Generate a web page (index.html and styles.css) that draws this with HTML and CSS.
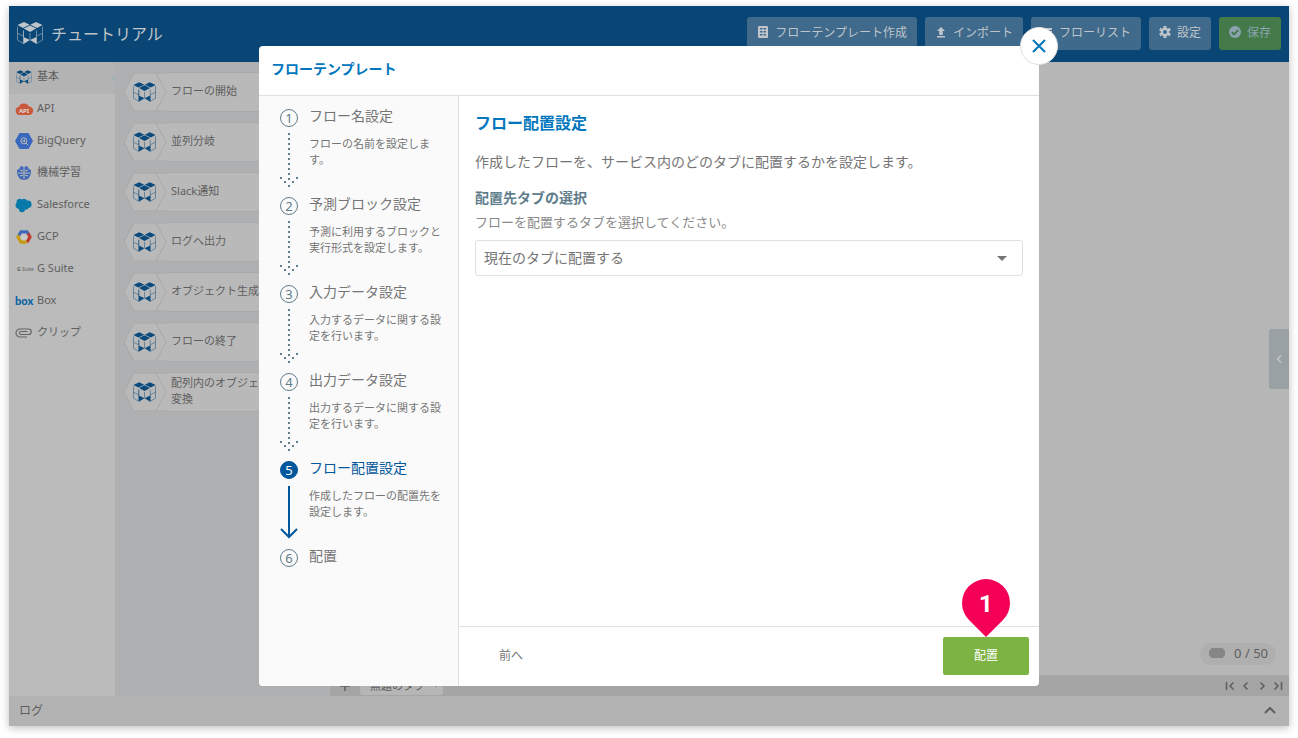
FILE: index.html
```html
<!DOCTYPE html>
<html lang="ja">
<head>
    <meta charset="UTF-8">
    <meta name="viewport" content="width=device-width, initial-scale=1.0">
    <title>チュートリアル</title>
    <link rel="stylesheet" href="styles.css">
</head>
<body>
    <svg class="defs" aria-hidden="true">
        <symbol id="logo" viewBox="0 0 26 22">
            <path d="M0.500 3 7 0l5.700 2.700L6 6zM25.500 3 19 0l-5.700 2.700L20 6zM6.800 6.600 13 3.500l6.200 3.100L13 10zM6.500 15 13 18l-6.500 4zM19.500 15 13 18l6.500 4z" fill="currentColor"/>
            <path d="M.5 4.500v13.500l6 3.500V8.500M.5 11.200l6 3M6.500 15V8.500M13 11v7M25.500 4.500v13.500l-6 3.500V8.500M25.500 11.200l-6 3" fill="none" stroke="currentColor" stroke-width=".9" stroke-opacity=".6"/>
        </symbol>
        <symbol id="hex" viewBox="0 0 44 40">
            <path class="hex-fill" d="M44 1H11L1 20l10 19h33"/>
            <path class="hex-line" d="M33 1l10 19-10 19"/>
        </symbol>
        <symbol id="dots" viewBox="0 0 20 55">
            <path d="M10 0v50" fill="none" stroke="currentColor" stroke-width="2" stroke-dasharray="2 3"/>
            <path d="M1 44h2v2H1zM5 48h2v2H5zM9 52h2v2H9zM13 48h2v2h-2zM17 44h2v2h-2z" fill="currentColor"/>
        </symbol>
        <symbol id="arrow" viewBox="0 0 20 55">
            <path d="M10 1v51M2 44l8 8 8-8" fill="none" stroke="currentColor" stroke-width="2"/>
        </symbol>
    </svg>

    <div class="app">
        <header class="header">
            <svg class="header-logo"><use href="#logo"/></svg>
            <h1>チュートリアル</h1>
            <div class="header-buttons">
                <button>
                    <svg viewBox="0 0 12 12"><path fill="currentColor" fill-rule="evenodd" d="M2 0h8a1 1 0 0 1 1 1v10a1 1 0 0 1-1 1H2a1 1 0 0 1-1-1V1a1 1 0 0 1 1-1zm1 2v1.500h2.500V2zm3.500 0v1.500H9V2zM3 5v1.500h2.500V5zm3.500 0v1.500H9V5zM3 8v1.500h2.500V8zm3.500 0v1.500H9V8z"/></svg>
                    フローテンプレート作成
                </button>
                <button>
                    <svg viewBox="0 0 12 12"><path fill="currentColor" d="M6 1l4 4H7.800v4H4.200V5H2zM2 10h8v1.600H2z"/></svg>
                    インポート
                </button>
                <button>
                    <svg viewBox="0 0 12 12"><path fill="currentColor" d="M1 2h10v2H1zM1 5h10v2H1zM1 8h10v2H1z"/></svg>
                    フローリスト
                </button>
                <button>
                    <svg viewBox="0 0 12 12"><g stroke="currentColor" stroke-width="3"><path d="M6 0v12M.8 3l10.400 6M.8 9l10.400-6"/></g><circle cx="6" cy="6" r="4.300" fill="currentColor"/><circle class="gear-hole" cx="6" cy="6" r="2"/></svg>
                    設定
                </button>
                <button class="save">
                    <svg viewBox="0 0 12 12"><circle cx="6" cy="6" r="6" fill="currentColor"/><path class="save-check" d="M2.800 6.200l2.200 2.200 4.300-4.300"/></svg>
                    保存
                </button>
            </div>
        </header>

        <div class="main">
            <ul class="categories">
                <li class="active"><svg class="brand" viewBox="0 0 18 18"><use href="#logo" x="1" y="2" width="16" height="14"/></svg>基本</li>
                <li>
                    <svg viewBox="0 0 18 18"><path fill="#c9573a" d="M4.500 15a4.200 4.200 0 0 1-.8-8.200A5.700 5.700 0 0 1 14 6.600a4.200 4.200 0 0 1 0 8.400z"/><text class="api-text" x="9" y="12.500">API</text></svg>
                    API
                </li>
                <li>
                    <svg viewBox="0 0 18 18"><path fill="#3a68bd" d="M4.500 1h9L18 9l-4.500 8h-9L0 9z"/><circle cx="8.800" cy="8.800" r="3" fill="none" stroke="#bbb"/><path d="M11 11l2 2M8 8v2M9.500 7.500V10" stroke="#bbb"/></svg>
                    BigQuery
                </li>
                <li>
                    <svg viewBox="0 0 18 18"><path fill="#4169b8" d="M6 2l3 1 3-1 2 3 2 1v3l-1 3-2 3-4 1-4-1-2-3-1-3V6l2-1z"/><path d="M9 3v12M3 9h12M5 6l3 1M13 6l-3 1M5 12l3-1M13 12l-3-1" stroke="#bbb" fill="none"/></svg>
                    機械学習
                </li>
                <li>
                    <svg viewBox="0 0 18 18"><path fill="#0879ab" d="M4 13a3.500 3.500 0 0 1-2.500-6A3.500 3.500 0 0 1 7 3.500a3.500 3.500 0 0 1 5 1 3.800 3.800 0 1 1 1.500 7.500 3 3 0 0 1-3.500 1.500A3 3 0 0 1 4 13z"/></svg>
                    Salesforce
                </li>
                <li>
                    <svg viewBox="0 0 18 18" fill="none" stroke-width="3.200"><path fill="#c8c8c8" d="M6 4h6l3 5-3 5H6L3 9z"/><path stroke="#4169b8" d="M3.800 7.500L6 3.800h6l1.500 2.500"/><path stroke="#bd3a2e" d="M13 5.500L15 9l-3 5.200"/><path stroke="#c69a12" d="M3.900 7.400L3 9l3 5.200h5.800"/></svg>
                    GCP
                </li>
                <li>
                    <svg viewBox="0 0 18 18"><text class="gsuite-text" x="2" y="11"><tspan class="g">G</tspan> Suite</text></svg>
                    G Suite
                </li>
                <li>
                    <svg viewBox="0 0 18 18"><text class="box-text" x="0" y="13">box</text></svg>
                    Box
                </li>
                <li>
                    <svg viewBox="0 0 18 18"><path fill="none" stroke="#666" stroke-width="1.200" d="M12 13H5a4 4 0 0 1 0-8h8.500a2.700 2.700 0 0 1 0 5.500H6a1.500 1.500 0 0 1 0-3h6.500"/></svg>
                    クリップ
                </li>
            </ul>

            <div class="blocks">
                <div class="block"><svg class="block-hex"><use href="#hex"/><use class="brand" href="#logo" x="10" y="10" width="23" height="20"/></svg><p>フローの開始</p></div>
                <div class="block"><svg class="block-hex"><use href="#hex"/><use class="brand" href="#logo" x="10" y="10" width="23" height="20"/></svg><p>並列分岐</p></div>
                <div class="block"><svg class="block-hex"><use href="#hex"/><use class="brand" href="#logo" x="10" y="10" width="23" height="20"/></svg><p>Slack通知</p></div>
                <div class="block"><svg class="block-hex"><use href="#hex"/><use class="brand" href="#logo" x="10" y="10" width="23" height="20"/></svg><p>ログへ出力</p></div>
                <div class="block"><svg class="block-hex"><use href="#hex"/><use class="brand" href="#logo" x="10" y="10" width="23" height="20"/></svg><p>オブジェクト生成</p></div>
                <div class="block"><svg class="block-hex"><use href="#hex"/><use class="brand" href="#logo" x="10" y="10" width="23" height="20"/></svg><p>フローの終了</p></div>
                <div class="block"><svg class="block-hex"><use href="#hex"/><use class="brand" href="#logo" x="10" y="10" width="23" height="20"/></svg><p>配列内のオブジェ<br>変換</p></div>
            </div>

            <div class="workspace">
                <div class="canvas">
                    <button class="handle" aria-label="開く">
                        <svg viewBox="0 0 8 10"><path d="M6 1.500L2.500 5 6 8.500" fill="none" stroke="currentColor" stroke-width="1.500"/></svg>
                    </button>
                    <div class="counter">
                        <svg viewBox="0 0 16 10"><path fill="currentColor" d="M2.500 0h11L16 3v4l-2.500 3h-11L0 7V3z"/></svg>
                        0 / 50
                    </div>
                </div>
                <div class="tabs">
                    <button class="add-tab" aria-label="タブを追加"><svg viewBox="0 0 10 10"><path d="M5 0v10M0 5h10" stroke="currentColor" stroke-width="1.500"/></svg></button>
                    <button class="tab">無題のタブ <svg viewBox="0 0 6 10"><path d="M0 3h6L3 7z" fill="currentColor"/></svg></button>
                    <div class="pager">
                        <button aria-label="最初"><svg viewBox="0 0 10 10"><path d="M1.500 1v8M8.500 1.500L5 5l3.500 3.500"/></svg></button>
                        <button aria-label="前"><svg viewBox="0 0 10 10"><path d="M6.500 1.500L3 5l3.500 3.500"/></svg></button>
                        <button aria-label="次"><svg viewBox="0 0 10 10"><path d="M3.500 1.500L7 5 3.500 8.500"/></svg></button>
                        <button aria-label="最後"><svg viewBox="0 0 10 10"><path d="M8.500 1v8M1.500 1.500L5 5 1.500 8.500"/></svg></button>
                    </div>
                </div>
            </div>
        </div>

        <footer class="log">
            <span>ログ</span>
            <svg viewBox="0 0 12 8"><path d="M1 7l5-5 5 5" fill="none" stroke="currentColor" stroke-width="2"/></svg>
        </footer>

        <div class="overlay">
            <div class="modal" role="dialog" aria-labelledby="modal-title">
                <h2 class="modal-title" id="modal-title">フローテンプレート</h2>
                <button class="close" aria-label="閉じる">
                    <svg viewBox="0 0 14 14"><path d="M1 1l12 12M13 1L1 13" fill="none" stroke="currentColor" stroke-width="2"/></svg>
                </button>
                <div class="modal-body">
                    <ol class="steps">
                        <li>
                            <div class="step-mark"><span>1</span><svg><use href="#dots"/></svg></div>
                            <div><h3>フロー名設定</h3><p>フローの名前を設定します。</p></div>
                        </li>
                        <li>
                            <div class="step-mark"><span>2</span><svg><use href="#dots"/></svg></div>
                            <div><h3>予測ブロック設定</h3><p>予測に利用するブロックと実行形式を設定します。</p></div>
                        </li>
                        <li>
                            <div class="step-mark"><span>3</span><svg><use href="#dots"/></svg></div>
                            <div><h3>入力データ設定</h3><p>入力するデータに関する設定を行います。</p></div>
                        </li>
                        <li>
                            <div class="step-mark"><span>4</span><svg><use href="#dots"/></svg></div>
                            <div><h3>出力データ設定</h3><p>出力するデータに関する設定を行います。</p></div>
                        </li>
                        <li class="current">
                            <div class="step-mark"><span>5</span><svg><use href="#arrow"/></svg></div>
                            <div><h3>フロー配置設定</h3><p>作成したフローの配置先を設定します。</p></div>
                        </li>
                        <li>
                            <div class="step-mark"><span>6</span></div>
                            <div><h3>配置</h3></div>
                        </li>
                    </ol>

                    <div class="panel">
                        <div class="panel-content">
                            <h3>フロー配置設定</h3>
                            <p class="lead">作成したフローを、サービス内のどのタブに配置するかを設定します。</p>
                            <label for="tab-select">配置先タブの選択</label>
                            <p class="hint">フローを配置するタブを選択してください。</p>
                            <div class="select-box">
                                <select id="tab-select">
                                    <option>現在のタブに配置する</option>
                                </select>
                                <svg viewBox="0 0 10 5"><path d="M0 0h10L5 5z" fill="currentColor"/></svg>
                            </div>
                        </div>
                        <div class="panel-footer">
                            <button class="back">前へ</button>
                            <div class="submit-box">
                                <button class="submit">配置</button>
                                <div class="pin">
                                    <svg viewBox="0 0 48 58"><path fill="#f50057" d="M24 58L7 41A24 24 0 1 1 41 41z"/></svg>
                                    <span>1</span>
                                </div>
                            </div>
                        </div>
                    </div>
                </div>
            </div>
        </div>
    </div>
</body>
</html>
```
FILE: styles.css
```css
* {
    box-sizing: border-box;
}

body {
    font-family: "Noto Sans", "Noto Sans CJK JP", sans-serif;
    font-size: 11px;
    background: #fff;
    margin: 0;
    padding: 6px 9px 12px;
    height: 100vh;
    color: #5e5e5e;
}

h1, h2, h3, p, ul, ol {
    margin: 0;
    padding: 0;
    font-weight: normal;
}

ul, ol {
    list-style: none;
}

button {
    font-family: inherit;
    border: none;
    padding: 0;
    color: inherit;
    background: none;
    cursor: pointer;
}

svg {
    flex: none;
}

.defs {
    display: none;
}

.app {
    position: relative;
    display: flex;
    flex-direction: column;
    height: 100%;
    box-shadow: 0 2px 8px rgba(0, 0, 0, 0.25);
}

/* Header */
.header {
    display: flex;
    align-items: center;
    gap: 8px;
    height: 56px;
    padding: 0 8px 2px;
    background: #0a4675;
    color: #bfc5ca;
}

.header-logo {
    width: 26px;
    height: 22px;
}

.header h1 {
    font-size: 16px;
}

.header-buttons {
    display: flex;
    gap: 8px;
    margin-left: auto;
}

.header-buttons button {
    display: flex;
    align-items: center;
    gap: 6px;
    height: 33px;
    padding: 0 10px 2px;
    font-size: 12px;
    background: #3f6a8c;
    border-radius: 3px;
    white-space: nowrap;
}

.header-buttons svg {
    width: 12px;
    height: 12px;
}

.header-buttons .save {
    background: #447a49;
    color: #8aa3ae;
}

.gear-hole {
    fill: #3f6a8c;
}

.save-check {
    fill: none;
    stroke: #447a49;
    stroke-width: 2;
}

.main {
    display: flex;
    flex: 1;
    min-height: 0;
}

/* Block categories */
.categories {
    width: 106px;
    background: #bbb;
}

.categories li {
    display: flex;
    align-items: center;
    gap: 4px;
    height: 32px;
    padding: 0 0 6px 6px;
}

.categories svg {
    width: 18px;
    height: 18px;
    margin-top: 4px;
    overflow: visible;
}

.categories .active {
    position: relative;
    background: #b3b3b3;
}

.categories .active::after {
    content: "";
    position: absolute;
    right: 0;
    top: 12px;
    border: 4px solid transparent;
    border-left: none;
    border-right-color: #a5b3b8;
}

.brand {
    color: #0a4a7c;
}

.api-text {
    font-size: 6px;
    font-weight: bold;
    fill: #ddd;
    text-anchor: middle;
}

.gsuite-text {
    font-size: 5px;
    fill: #5e5e5e;
}

.gsuite-text .g {
    font-weight: bold;
}

.box-text {
    font-family: Lato, sans-serif;
    font-size: 11px;
    font-weight: 900;
    fill: #0a64a4;
}

.blocks {
    display: flex;
    flex-direction: column;
    gap: 10px;
    width: 215px;
    padding: 10px 0 0 8px;
    background: #afb0b2;
}

.block {
    display: flex;
    height: 40px;
}

.block-hex {
    width: 44px;
    height: 40px;
}

.hex-fill {
    fill: #b9b9b9;
    stroke: #a9a9aa;
    stroke-width: 1;
}

.hex-line {
    fill: none;
    stroke: #a9a9aa;
    stroke-width: 1;
}

.block p {
    flex: 1;
    display: flex;
    align-items: center;
    padding: 0 0 2px 4px;
    line-height: 16px;
    background: #b9b9b9;
    border: solid #a9a9aa;
    border-width: 1px 0;
}

/* Flow canvas */
.workspace {
    display: flex;
    flex-direction: column;
    flex: 1;
}

.canvas {
    display: flex;
    flex: 1;
    flex-direction: column;
    align-items: flex-end;
    justify-content: space-between;
    background: #b6b6b6;
}

.handle {
    width: 20px;
    height: 60px;
    margin-top: 267px;
    background: #9aa1a5;
    border-radius: 3px 0 0 3px;
    color: #c4c4c4;
}

.handle svg {
    width: 8px;
    height: 10px;
}

.counter {
    display: flex;
    align-items: center;
    gap: 9px;
    height: 22px;
    margin: 0 13px 10px 0;
    padding: 0 8px 2px 9px;
    font-size: 13px;
    border-radius: 11px;
    background: #afafaf;
}

.counter svg {
    width: 16px;
    height: 10px;
    color: #868686;
}

.tabs {
    display: flex;
    align-items: center;
    height: 21px;
    padding: 0 6px 0 10px;
    background: #a5a5a5;
}

.add-tab svg {
    width: 10px;
    height: 10px;
    display: block;
}

.tab {
    display: flex;
    align-items: center;
    gap: 8px;
    height: 18px;
    margin-left: 10px;
    padding: 0 4px 2px 10px;
    font-size: 11px;
    background: #b6b6b6;
    border-radius: 3px;
}

.tab svg {
    width: 6px;
    height: 10px;
}

.pager {
    display: flex;
    gap: 6px;
    margin-left: auto;
}

.pager svg {
    display: block;
    width: 10px;
    height: 10px;
    fill: none;
    stroke: currentColor;
    stroke-width: 1.5;
}

.log {
    display: flex;
    align-items: center;
    justify-content: space-between;
    height: 30px;
    padding: 0 13px 2px 10px;
    font-size: 12px;
    background: #b3b3b3;
}

.log svg {
    width: 12px;
    height: 8px;
}

/* Modal */
.overlay {
    position: absolute;
    inset: 0;
    display: flex;
    justify-content: center;
    padding: 40px;
}

.modal {
    position: relative;
    display: flex;
    flex-direction: column;
    width: 100%;
    max-width: 780px;
    background: #fff;
    border-radius: 4px;
    color: #757575;
}

.modal-title {
    padding: 11px 12px 14px;
    font-size: 14px;
    line-height: 24px;
    font-weight: bold;
    color: #0277bd;
    border-bottom: 1px solid #e0e0e0;
}

.close {
    position: absolute;
    top: -19px;
    right: -19px;
    display: flex;
    align-items: center;
    justify-content: center;
    width: 38px;
    height: 38px;
    background: #fff;
    border: 1px solid #e0e0e0;
    border-radius: 50%;
    color: #0277bd;
}

.close svg {
    width: 14px;
    height: 14px;
}

.modal-body {
    display: flex;
    flex: 1;
    min-height: 0;
}

.steps {
    width: 200px;
    padding: 8px 14px 0 20px;
    background: #fafafa;
    border-right: 1px solid #e0e0e0;
    border-bottom-left-radius: 4px;
}

.steps li {
    display: flex;
    gap: 10px;
    height: 88px;
}

.step-mark {
    display: flex;
    flex-direction: column;
    align-items: center;
    gap: 6px;
    width: 20px;
    flex: none;
    padding-top: 5px;
    color: #607d8b;
}

.step-mark span {
    width: 18px;
    height: 18px;
    font-size: 13px;
    line-height: 16px;
    text-align: center;
    border: 1px solid #607d8b;
    border-radius: 50%;
}

.step-mark svg {
    width: 20px;
    height: 55px;
}

.steps h3 {
    font-size: 14px;
    line-height: 24px;
}

.steps p {
    margin-top: 8px;
    font-size: 11px;
    line-height: 16px;
}

.current .step-mark,
.current h3 {
    color: #01579b;
}

.current .step-mark span {
    background: #01579b;
    border-color: #01579b;
    color: #fff;
}

.panel {
    display: flex;
    flex-direction: column;
    flex: 1;
}

.panel-content {
    flex: 1;
    padding: 16px;
    font-size: 14px;
    line-height: 20px;
}

.panel-content h3 {
    font-size: 16px;
    line-height: 22px;
    font-weight: bold;
    color: #0277bd;
}

.lead {
    margin: 18px 0 16px;
}

.panel-content label {
    display: block;
    font-weight: bold;
    color: #607d8b;
}

.hint {
    margin: 4px 0 8px;
    font-size: 13px;
    color: #8a8a8a;
}

.select-box {
    display: grid;
    align-items: center;
}

.select-box select,
.select-box svg {
    grid-area: 1 / 1;
}

.select-box select {
    appearance: none;
    height: 36px;
    padding: 0 8px;
    font: inherit;
    color: inherit;
    background: #fff;
    border: 1px solid #e0e0e0;
    border-radius: 3px;
}

.select-box svg {
    justify-self: end;
    width: 10px;
    height: 5px;
    margin-right: 16px;
    pointer-events: none;
}

.panel-footer {
    display: flex;
    align-items: center;
    justify-content: space-between;
    height: 60px;
    padding: 0 10px 2px 40px;
    border-top: 1px solid #e0e0e0;
}

.panel-footer button {
    padding-bottom: 2px;
    font-size: 12px;
}

.submit-box {
    position: relative;
}

.submit {
    width: 86px;
    height: 38px;
    background: #7cb342;
    border-radius: 2px;
    color: #fff;
}

/* Numbered marker pointing at the button */
.pin {
    position: absolute;
    bottom: 100%;
    left: 50%;
    width: 48px;
    height: 58px;
    margin-left: -24px;
    display: grid;
}

.pin svg,
.pin span {
    grid-area: 1 / 1;
}

.pin span {
    font-family: Roboto, sans-serif;
    font-size: 24px;
    font-weight: bold;
    line-height: 50px;
    text-align: center;
    color: #fff;
}
```
